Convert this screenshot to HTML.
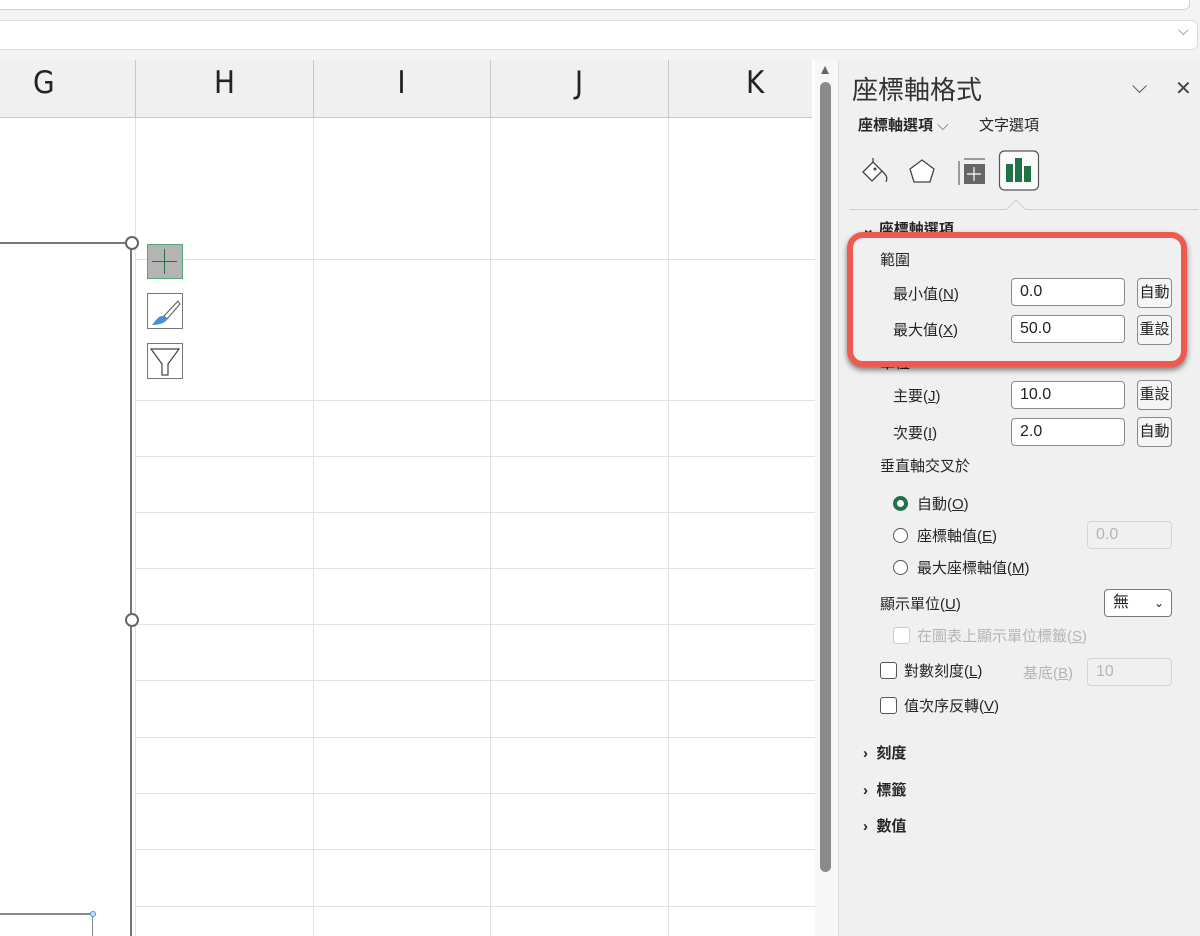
<!DOCTYPE html>
<html><head><meta charset="utf-8"><style>
*{margin:0;padding:0;box-sizing:border-box}
body{width:1200px;height:936px;overflow:hidden;background:#f3f3f3;font-family:"Liberation Sans","Noto Sans CJK TC",sans-serif;position:relative;color:#222}
.a{position:absolute}
.hl{position:absolute;height:1px;background:#e1e1e1}
.vl{position:absolute;width:1px;background:#e1e1e1}
.col{position:absolute;top:60px;height:58px;font-size:31px;color:#222;text-align:center;line-height:46px;font-family:"DejaVu Sans Condensed","Liberation Sans",sans-serif}
.t{position:absolute;font-size:15px;color:#262626;white-space:nowrap}
.inp{position:absolute;background:#fff;border:1px solid #8a8a8a;border-radius:4px;height:28px;font-size:16px;padding-left:8px;line-height:26px}
.btn{position:absolute;border:1px solid #8a8a8a;border-radius:4px;height:30px;width:35px;font-size:15px;text-align:center;line-height:28px;background:#f5f5f5}
.dis{color:#b5b5b5}
.rad{position:absolute;width:15px;height:15px;border:1.5px solid #555;border-radius:50%;background:#fff}
.chk{position:absolute;width:17px;height:17px;border:1.5px solid #555;border-radius:3px;background:#fff}
u{text-decoration:underline}
</style></head><body>
<div class="a" style="left:0;top:0;width:1190px;height:10px;background:#fff;border-bottom:1px solid #d0d0d0;border-right:1px solid #d0d0d0;border-radius:0 0 6px 0"></div>
<div class="a" style="left:0;top:20px;width:1198px;height:30px;background:#fff;border:1px solid #dcdcdc;border-left:none;border-radius:0 6px 6px 0"></div>
<div class="a" style="left:1178px;top:22px;font-size:14px;color:#777">⌵</div>
<div class="a" style="left:0;top:60px;width:815px;height:876px;background:#fff"></div>
<div class="a" style="left:0;top:60px;width:812px;height:58px;background:#f0f0f0;border-bottom:1px solid #c8c8c8"></div>
<div class="col" style="left:0;width:135px;text-align:left;padding-left:33px">G</div>
<div class="col" style="left:136px;width:177px">H</div>
<div class="col" style="left:313px;width:177px">I</div>
<div class="col" style="left:490px;width:178px">J</div>
<div class="col" style="left:668px;width:178px;text-align:left;padding-left:78px">K</div>
<div class="vl" style="left:135px;top:60px;height:58px;background:#c8c8c8"></div>
<div class="vl" style="left:313px;top:60px;height:58px;background:#c8c8c8"></div>
<div class="vl" style="left:490px;top:60px;height:58px;background:#c8c8c8"></div>
<div class="vl" style="left:668px;top:60px;height:58px;background:#c8c8c8"></div>
<div class="vl" style="left:135px;top:118px;height:818px"></div>
<div class="vl" style="left:313px;top:118px;height:818px"></div>
<div class="vl" style="left:490px;top:118px;height:818px"></div>
<div class="vl" style="left:668px;top:118px;height:818px"></div>
<div class="hl" style="left:135px;top:259px;width:680px"></div>
<div class="hl" style="left:135px;top:400px;width:680px"></div>
<div class="hl" style="left:135px;top:456px;width:680px"></div>
<div class="hl" style="left:135px;top:512px;width:680px"></div>
<div class="hl" style="left:135px;top:568px;width:680px"></div>
<div class="hl" style="left:135px;top:624px;width:680px"></div>
<div class="hl" style="left:135px;top:680px;width:680px"></div>
<div class="hl" style="left:135px;top:737px;width:680px"></div>
<div class="hl" style="left:135px;top:793px;width:680px"></div>
<div class="hl" style="left:135px;top:849px;width:680px"></div>
<div class="hl" style="left:135px;top:906px;width:680px"></div>
<div class="a" style="left:0;top:242px;width:132px;height:694px;background:#fff;border-top:2px solid #777;border-right:2px solid #777"></div>
<div class="a" style="left:125px;top:236px;width:14px;height:14px;border:2px solid #666;border-radius:50%;background:#fff"></div>
<div class="a" style="left:125px;top:613px;width:14px;height:14px;border:2px solid #666;border-radius:50%;background:#fff"></div>
<div class="a" style="left:0;top:913px;width:93px;height:2px;background:#888"></div>
<div class="a" style="left:92px;top:914px;width:1px;height:22px;background:#888"></div>
<div class="a" style="left:90px;top:911px;width:6px;height:6px;border:1px solid #4a90d9;border-radius:50%;background:#cfe3f7"></div>
<div class="a" style="left:147px;top:244px;width:36px;height:35px;background:#b4b4b4;border:1px solid #5aa577"></div>
<div class="a" style="left:164px;top:249px;width:1px;height:25px;background:#217346"></div>
<div class="a" style="left:152px;top:261px;width:25px;height:1px;background:#217346"></div>
<div class="a" style="left:147px;top:293px;width:36px;height:36px;border:1px solid #777;background:#fff"></div>
<svg class="a" style="left:147px;top:293px" width="36" height="36"><path d="M31 8 L17 23 L20 26 L33 11 Z" fill="#fff" stroke="#555" stroke-width="1"/><path d="M17 23 C12 22 9 27 5 32 C12 32 19 30 20 26 Z" fill="#4a90d9"/></svg>
<div class="a" style="left:147px;top:343px;width:36px;height:36px;border:1px solid #777;background:#fff"></div>
<svg class="a" style="left:147px;top:343px" width="36" height="36"><path d="M4 6 H32 L21 21 V32 H15 V21 Z" fill="none" stroke="#444" stroke-width="1.2"/></svg>
<div class="a" style="left:815px;top:60px;width:23px;height:876px;background:#f7f7f7"></div>
<div class="a" style="left:820px;top:82px;width:11px;height:790px;background:#8a8a8a;border-radius:6px"></div>
<div class="a" style="left:821px;top:66px;width:0;height:0;border-left:4.5px solid transparent;border-right:4.5px solid transparent;border-bottom:8px solid #666"></div>
<div class="a" style="left:838px;top:60px;width:362px;height:876px;background:#f0f0f0;border-left:1px solid #ddd"></div>
<div class="t" style="left:852px;top:70px;font-size:26px;color:#333">座標軸格式</div>
<div class="t" style="left:1132px;top:76px;font-size:20px;color:#444">⌵</div>
<div class="t" style="left:1175px;top:76px;font-size:20px;color:#444">✕</div>
<div class="t" style="left:858px;top:114px;font-weight:bold">座標軸選項 <span style="color:#2b6cb0;font-weight:normal">⌵</span></div>
<div class="t" style="left:979px;top:114px">文字選項</div>
<svg class="a" style="left:860px;top:150px" width="190" height="45">
<path d="M3 22 L13 12 L22 21 L12 31 Z" fill="#fff" stroke="#444" stroke-width="1.3"/><path d="M13 12 L13 8 M22 21 C26 25 28 27 26 32" fill="none" stroke="#444" stroke-width="1.3"/><circle cx="15" cy="19" r="1.5" fill="#444"/>
<path d="M62 10 L74 19 L70 32 L54 32 L50 19 Z" fill="#fff" stroke="#444" stroke-width="1.3"/>
<rect x="104" y="14" width="21" height="20" fill="#666"/><path d="M99 11 V35 M104 9 H125" stroke="#444" stroke-width="1" fill="none"/><path d="M114 17 V31 M107 24 H121" stroke="#fff" stroke-width="1.2"/>
<rect x="139.5" y="1" width="39" height="39" rx="5" fill="#fafafa" stroke="#555" stroke-width="1.2"/>
<rect x="146" y="14" width="7" height="18" fill="#217346"/><rect x="155" y="8" width="7" height="24" fill="#217346"/><rect x="164" y="16" width="7" height="16" fill="#217346"/>
</svg>
<div class="a" style="left:850px;top:209px;width:348px;height:1px;background:#d0d0d0"></div>
<svg class="a" style="left:1006px;top:199px" width="20" height="12"><path d="M0 11 L10 1 L20 11" fill="#f0f0f0" stroke="#d0d0d0"/></svg>
<div class="t" style="left:862px;top:218px;font-weight:bold">⌄ 座標軸選項</div>
<div class="t" style="left:880px;top:352px">單位</div>
<div class="a" style="left:847px;top:232px;width:340px;height:135px;border:6px solid #ef5a4f;border-radius:16px;background:#f0f0f0;box-shadow:0 3px 6px rgba(0,0,0,.5)"></div>
<div class="t" style="left:880px;top:249px">範圍</div>
<div class="t" style="left:893px;top:283px">最小值(<u>N</u>)</div>
<div class="inp" style="left:1011px;top:278px;width:114px">0.0</div>
<div class="btn" style="left:1137px;top:278px">自動</div>
<div class="t" style="left:893px;top:319px">最大值(<u>X</u>)</div>
<div class="inp" style="left:1011px;top:315px;width:114px">50.0</div>
<div class="btn" style="left:1137px;top:315px">重設</div>
<div class="t" style="left:893px;top:385px">主要(<u>J</u>)</div>
<div class="inp" style="left:1011px;top:381px;width:114px">10.0</div>
<div class="btn" style="left:1137px;top:380px">重設</div>
<div class="t" style="left:893px;top:422px">次要(<u>I</u>)</div>
<div class="inp" style="left:1011px;top:418px;width:114px">2.0</div>
<div class="btn" style="left:1137px;top:417px">自動</div>
<div class="t" style="left:880px;top:455px">垂直軸交叉於</div>
<div class="rad" style="left:893px;top:496px;border:4px solid #217346"></div>
<div class="t" style="left:917px;top:493px">自動(<u>O</u>)</div>
<div class="rad" style="left:893px;top:528px"></div>
<div class="t" style="left:917px;top:525px">座標軸值(<u>E</u>)</div>
<div class="inp dis" style="left:1087px;top:521px;width:85px;border-color:#d5d5d5;background:#f0f0f0">0.0</div>
<div class="rad" style="left:893px;top:560px"></div>
<div class="t" style="left:917px;top:557px">最大座標軸值(<u>M</u>)</div>
<div class="t" style="left:880px;top:593px">顯示單位(<u>U</u>)</div>
<div class="inp" style="left:1104px;top:589px;width:68px;height:28px;border-color:#777">無<span style="position:absolute;right:7px;top:0;font-size:12px">⌄</span></div>
<div class="chk" style="left:893px;top:627px;border-color:#ccc"></div>
<div class="t dis" style="left:917px;top:625px">在圖表上顯示單位標籤(<u>S</u>)</div>
<div class="chk" style="left:880px;top:662px"></div>
<div class="t" style="left:904px;top:660px">對數刻度(<u>L</u>)</div>
<div class="t dis" style="left:1023px;top:662px">基底(<u>B</u>)</div>
<div class="inp dis" style="left:1087px;top:658px;width:85px;border-color:#d5d5d5;background:#f0f0f0">10</div>
<div class="chk" style="left:880px;top:697px"></div>
<div class="t" style="left:904px;top:695px">值次序反轉(<u>V</u>)</div>
<div class="t" style="left:863px;top:742px;font-weight:bold">›&nbsp; 刻度</div>
<div class="t" style="left:863px;top:779px;font-weight:bold">›&nbsp; 標籤</div>
<div class="t" style="left:863px;top:815px;font-weight:bold">›&nbsp; 數值</div>
</body></html>
